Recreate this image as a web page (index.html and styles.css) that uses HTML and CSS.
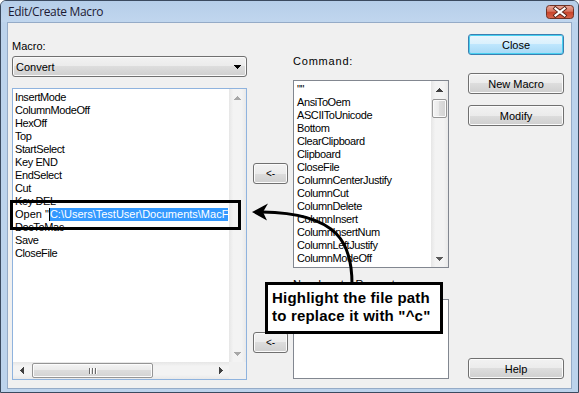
FILE: index.html
```html
<!DOCTYPE html>
<html>
<head>
<meta charset="utf-8">
<link rel="stylesheet" href="styles.css">
</head>
<body>
<div class="window">
  <div class="titlebar">
    <span class="title">Edit/Create Macro</span>
    <svg class="closebtn" width="28" height="14" viewBox="0 0 28 14">
      <defs>
        <linearGradient id="red" x1="0" y1="0" x2="0" y2="1">
          <stop offset="0" stop-color="#e9a99b"/>
          <stop offset="0.45" stop-color="#d7745f"/>
          <stop offset="0.5" stop-color="#c8432a"/>
          <stop offset="1" stop-color="#d8654c"/>
        </linearGradient>
      </defs>
      <rect x="0.5" y="0.5" width="27" height="13" rx="3" fill="url(#red)" stroke="#6f3326"/>
      <path d="M9.5,3.5 L18.5,10.5 M18.5,3.5 L9.5,10.5" stroke="#5a2418" stroke-width="4" stroke-linecap="square"/>
      <path d="M9.5,3.5 L18.5,10.5 M18.5,3.5 L9.5,10.5" stroke="#ffffff" stroke-width="2.2" stroke-linecap="square"/>
    </svg>
  </div>
  <div class="client">
    <div class="col col-macro">
      <div class="label">Macro:</div>
      <div class="combo">
        <span>Convert</span>
        <svg width="7" height="4" viewBox="0 0 7 4"><path d="M0,0 H7 V1 H6 V2 H5 V3 H4 V4 H3 V3 H2 V2 H1 V1 H0 Z" fill="#000"/></svg>
      </div>
      <div class="listbox listbox-macro">
        <div class="items">
          <div class="item">InsertMode</div>
          <div class="item">ColumnModeOff</div>
          <div class="item">HexOff</div>
          <div class="item">Top</div>
          <div class="item">StartSelect</div>
          <div class="item">Key END</div>
          <div class="item">EndSelect</div>
          <div class="item">Cut</div>
          <div class="item">Key DEL</div>
          <div class="item edit-line">Open "<span class="text-caret"></span><span class="sel">C:\Users\TestUser\Documents\MacF</span></div>
          <div class="item">DocToMac</div>
          <div class="item">Save</div>
          <div class="item">CloseFile</div>
        </div>
        <div class="vscroll">
          <div class="sb-btn"><svg width="7" height="4" viewBox="0 0 7 4"><path d="M3,0 H4 V1 H5 V2 H6 V3 H7 V4 H0 V3 H1 V2 H2 V1 H3 Z" fill="#a8a8a8"/></svg></div>
          <div class="sb-track"></div>
          <div class="sb-btn"><svg width="7" height="4" viewBox="0 0 7 4"><path d="M0,0 H7 V1 H6 V2 H5 V3 H4 V4 H3 V3 H2 V2 H1 V1 H0 Z" fill="#a8a8a8"/></svg></div>
        </div>
        <div class="hscroll">
          <div class="sb-btn"><svg width="4" height="7" viewBox="0 0 4 7"><path d="M3,0 H4 V7 H3 V6 H2 V5 H1 V4 H0 V3 H1 V2 H2 V1 H3 Z" fill="#404040"/></svg></div>
          <div class="sb-track-h">
            <div class="thumb-h">
              <svg width="8" height="6" viewBox="0 0 8 6"><path d="M0,0h1v6h-1z M3,0h1v6h-1z M6,0h1v6h-1z" fill="#6b6b6b"/><path d="M1,0h1v6h-1z M4,0h1v6h-1z M7,0h1v6h-1z" fill="#ffffff"/></svg>
            </div>
          </div>
          <div class="sb-btn"><svg width="4" height="7" viewBox="0 0 4 7"><path d="M0,0 H1 V1 H2 V2 H3 V3 H4 V4 H3 V5 H2 V6 H1 V7 H0 Z" fill="#404040"/></svg></div>
        </div>
        <div class="corner"></div>
      </div>
    </div>

    <div class="col col-arrows">
      <div class="btn btn-small">&lt;-</div>
      <div class="btn btn-small btn-second">&lt;-</div>
    </div>

    <div class="col col-cmd">
      <div class="label label-wide">Command:</div>
      <div class="listbox listbox-cmd">
        <div class="items items-cmd">
          <div class="item">""</div>
          <div class="item">AnsiToOem</div>
          <div class="item">ASCIIToUnicode</div>
          <div class="item">Bottom</div>
          <div class="item">ClearClipboard</div>
          <div class="item">Clipboard</div>
          <div class="item">CloseFile</div>
          <div class="item">ColumnCenterJustify</div>
          <div class="item">ColumnCut</div>
          <div class="item">ColumnDelete</div>
          <div class="item">ColumnInsert</div>
          <div class="item">ColumnInsertNum</div>
          <div class="item">ColumnLeftJustify</div>
          <div class="item">ColumnModeOff</div>
        </div>
        <div class="vscroll">
          <div class="sb-btn"><svg width="7" height="4" viewBox="0 0 7 4"><path d="M3,0 H4 V1 H5 V2 H6 V3 H7 V4 H0 V3 H1 V2 H2 V1 H3 Z" fill="#404040"/></svg></div>
          <div class="sb-track"><div class="thumb-v"></div></div>
          <div class="sb-btn"><svg width="7" height="4" viewBox="0 0 7 4"><path d="M0,0 H7 V1 H6 V2 H5 V3 H4 V4 H3 V3 H2 V2 H1 V1 H0 Z" fill="#5a5a5a"/></svg></div>
        </div>
      </div>
      <div class="label label-wide label-repeat">Number to Repeat:</div>
      <div class="listbox listbox-repeat"></div>
    </div>

    <div class="col col-btns">
      <div class="btn btn-default">Close</div>
      <div class="btn btn-new">New Macro</div>
      <div class="btn btn-modify">Modify</div>
      <div class="btn btn-help">Help</div>
    </div>
  </div>

  <div class="hl-box"></div>
  <div class="callout">Highlight the file path<br>to replace it with "^c"</div>
  <svg class="pointer" width="579" height="393" viewBox="0 0 579 393">
    <path d="M352,284 C352,245 340,213 262,212" fill="none" stroke="#000" stroke-width="3"/>
    <polygon points="252,212 268,203.5 263,212 267,220.5" fill="#000"/>
  </svg>
</div>
</body>
</html>
```

FILE: styles.css
```css
* { box-sizing: border-box; }

body {
  margin: 0;
  font-family: "Liberation Sans", Arial, sans-serif;
  font-size: 11px;
  color: #000;
  background: #ffffff;
}

.window {
  position: relative;
  width: 579px;
  height: 393px;
  border: 1px solid #3b4a5f;
  border-radius: 6px 6px 0 0;
  background: #bcd3ec;
  display: flex;
  flex-direction: column;
  overflow: hidden;
}

.titlebar {
  height: 21px;
  flex: none;
  display: flex;
  justify-content: space-between;
  align-items: flex-start;
  background: linear-gradient(#b6cee9, #c0d6ee);
}

.title {
  font-family: "Open Sans", "Noto Sans", sans-serif;
  font-size: 12px;
  line-height: 16px;
  letter-spacing: -0.35px;
  margin: 3px 0 0 7px;
  color: #1c1a33;
}

.closebtn {
  display: block;
  margin: 4px 4px 0 0;
}

.client {
  flex: 1;
  margin: 0 6px 3px 6px;
  border: 1px solid #95abc7;
  background: #f0f0f0;
  display: flex;
  padding-left: 4px;
}

.col {
  display: flex;
  flex-direction: column;
  flex: none;
}

.col-macro { width: 235px; padding-top: 17px; }
.col-arrows { width: 35px; margin-left: 6px; padding-top: 140px; }
.col-cmd { width: 156px; margin-left: 5px; padding-top: 32px; }
.col-btns { width: 96px; margin-left: 19px; padding-top: 11px; padding-bottom: 9px; }

.label {
  height: 13px;
  line-height: 13px;
  white-space: nowrap;
}

.label-wide { letter-spacing: 0.8px; }
.label-repeat { margin-top: 10px; }

.combo {
  margin-top: 3px;
  height: 21px;
  border: 1px solid #707070;
  border-radius: 3px;
  background: linear-gradient(#f2f2f2 0%, #ebebeb 50%, #dddddd 50%, #cfcfcf 100%);
  box-shadow: inset 0 0 0 1px #fafafa;
  display: flex;
  align-items: center;
  justify-content: space-between;
  padding: 0 5px 0 3px;
}

.combo svg { display: block; }

.listbox {
  background: #ffffff;
  border: 1px solid #828790;
}

.listbox-macro {
  margin-top: 11px;
  height: 292px;
  border-color: #8fb3de;
  display: grid;
  grid-template-columns: 216px 17px;
  grid-template-rows: 1fr 17px;
}

.listbox-cmd {
  margin-top: 12px;
  height: 188px;
  display: grid;
  grid-template-columns: 137px 17px;
  grid-template-rows: 1fr;
}

.listbox-repeat {
  margin-top: 8px;
  height: 80px;
}

.items {
  overflow: hidden;
  padding: 2px 0 0 2px;
}

.items-cmd { padding: 2px 0 0 3px; }

.item {
  height: 13px;
  line-height: 13px;
  white-space: nowrap;
  letter-spacing: -0.4px;
}

.edit-line { letter-spacing: 0; }

.text-caret {
  display: inline-block;
  width: 1px;
  height: 13px;
  background: #000;
  vertical-align: top;
}

.sel {
  background: #3399ff;
  color: #ffffff;
  display: inline-block;
  height: 13px;
  vertical-align: top;
}

.vscroll {
  display: flex;
  flex-direction: column;
  background: linear-gradient(to right, #e6e6e6, #f3f3f3 25%, #f3f3f3 75%, #e9e9e9);
}

.hscroll {
  display: flex;
  background: linear-gradient(#e6e6e6, #f3f3f3 25%, #f3f3f3 75%, #e9e9e9);
}

.sb-btn {
  flex: none;
  width: 17px;
  height: 17px;
  display: flex;
  align-items: center;
  justify-content: center;
}

.sb-btn svg { display: block; }

.sb-track { flex: 1; }

.sb-track-h {
  flex: 1;
  padding: 1px 0 1px 2px;
}

.thumb-h {
  width: 121px;
  height: 15px;
  border: 1px solid #959595;
  border-radius: 2px;
  background: linear-gradient(#f4f4f4 0%, #e9e9e9 50%, #dcdcdc 50%, #d3d3d3 100%);
  box-shadow: inset 0 0 0 1px #fbfbfb;
  display: flex;
  align-items: center;
  justify-content: center;
}

.thumb-h svg { display: block; }

.thumb-v {
  margin: 1px 1px 0 1px;
  height: 19px;
  border: 1px solid #959595;
  border-radius: 2px;
  background: linear-gradient(to right, #f4f4f4 0%, #e9e9e9 50%, #dcdcdc 50%, #d3d3d3 100%);
  box-shadow: inset 0 0 0 1px #fbfbfb;
}

.corner { background: #f0f0f0; }

.btn {
  height: 21px;
  border: 1px solid #707070;
  border-radius: 3px;
  background: linear-gradient(#f2f2f2 0%, #ebebeb 50%, #dddddd 50%, #cfcfcf 100%);
  box-shadow: inset 0 0 0 1px #fbfbfb;
  display: flex;
  align-items: center;
  justify-content: center;
  white-space: nowrap;
}

.btn-small { font-size: 10px; }
.btn-second { margin-top: 148px; }

.btn-default {
  border-color: #3c7fb1;
  background: linear-gradient(#eaf6fd 0%, #d9f0fc 50%, #bee6fd 50%, #a7d9f5 100%);
  box-shadow: inset 0 0 0 1px #48d0f0;
}

.btn-new { margin-top: 18px; }
.btn-modify { margin-top: 11px; }
.btn-help { margin-top: auto; }

.hl-box {
  position: absolute;
  left: 9px;
  top: 199px;
  width: 231px;
  height: 30px;
  border: 3px solid #000;
}

.callout {
  position: absolute;
  left: 264px;
  top: 281px;
  width: 178px;
  height: 52px;
  border: 3px solid #000;
  background: #ffffff;
  padding: 4px 0 0 4px;
  font-family: "Liberation Sans", Arial, sans-serif;
  font-weight: bold;
  font-size: 15px;
  line-height: 18px;
  letter-spacing: 0.2px;
  white-space: nowrap;
}

.pointer {
  position: absolute;
  left: -1px;
  top: -1px;
  pointer-events: none;
}
```
